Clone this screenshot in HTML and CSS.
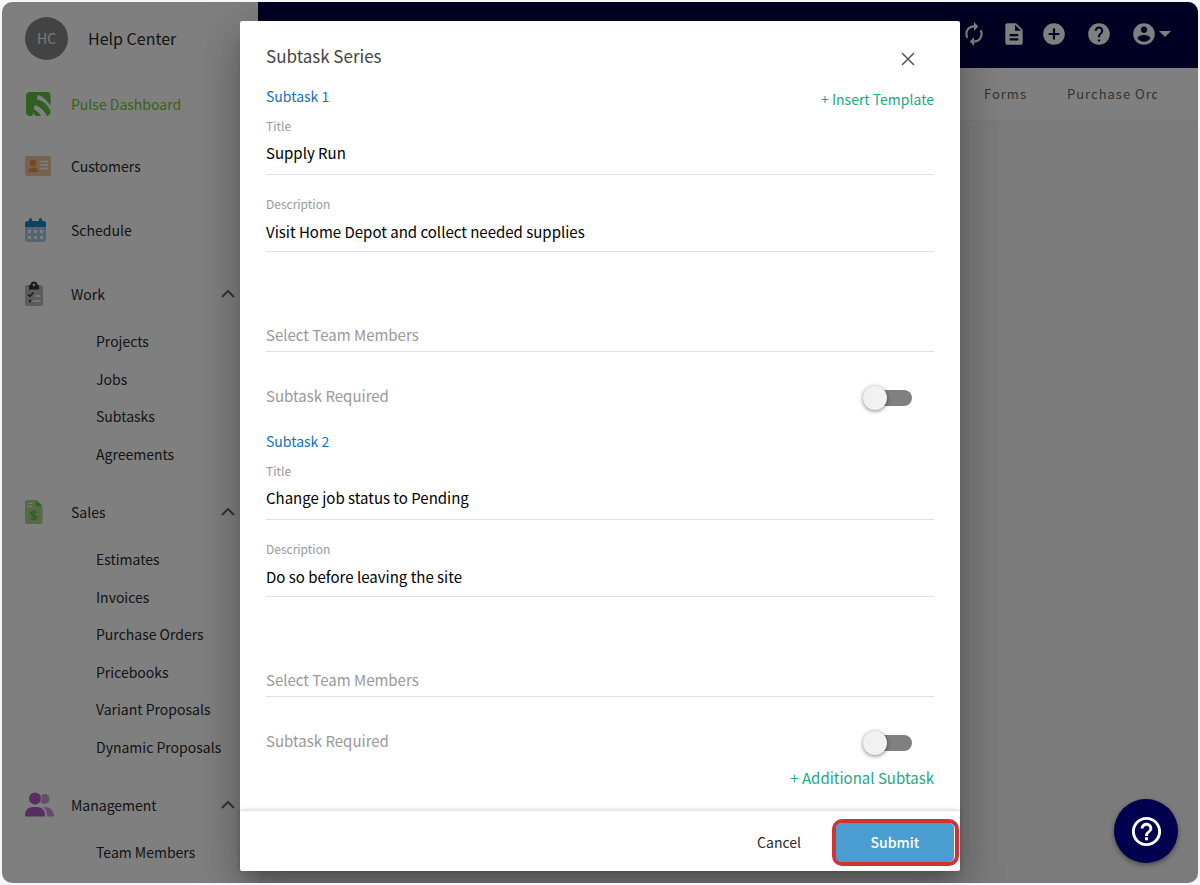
FILE: index.html
```html
<!DOCTYPE html>
<html lang="en">
<head>
    <meta charset="UTF-8">
    <meta name="viewport" content="width=device-width, initial-scale=1.0">
    <title>Subtask Series</title>
    <link rel="stylesheet" href="styles.css">
</head>
<body>
<div class="app">
    <aside class="sidebar">
        <div class="profile">
            <span class="avatar">HC</span>
            <span class="profile-name">Help Center</span>
        </div>
        <nav>
            <a href="#" class="nav-link active">
                <svg class="nav-icon" viewBox="0 0 26 26">
                    <path fill="#62bd45" fill-rule="evenodd" d="M5 1h17a3.500 3.500 0 0 1 3.500 3.500V15C22 9 17.500 5 12.500 4L12 8.500c6 1 11 5.500 13.500 11.500v2l-2.500 3h-1C19 19 14 15 9.500 14l-.5 4.500c3 1.500 5.500 3.500 7 6.500h-5.500L8.500 22 7 25H5a4 4 0 0 1-4-4V5a4 4 0 0 1 4-4z"/>
                </svg>
                Pulse Dashboard
            </a>
            <a href="#" class="nav-link">
                <svg class="nav-icon" viewBox="0 0 26 26">
                    <rect y="3" width="26" height="20" rx="2" fill="#eec4a0"/>
                    <circle cx="8" cy="10" r="3.200" fill="#e8943a"/>
                    <path fill="#e8943a" d="M3 19c0-3 2-4.500 5-4.500s5 1.500 5 4.500z"/>
                    <path stroke="#fff" stroke-width="1.600" d="M15.500 8.500H23M15.500 12H23M15.500 15.500H23"/>
                </svg>
                Customers
            </a>
            <a href="#" class="nav-link">
                <svg class="nav-icon" viewBox="0 0 26 26">
                    <path fill="#aac9e6" d="M0 9h21v13.500a2.500 2.500 0 0 1-2.500 2.500h-16A2.500 2.500 0 0 1 0 22.500z"/>
                    <path fill="#1a86c4" d="M2.500 4H4V2.500a1.500 1.500 0 0 1 3 0V4h7V2.500a1.500 1.500 0 0 1 3 0V4h1.500A2.500 2.500 0 0 1 21 6.500V10H0V6.500A2.500 2.500 0 0 1 2.500 4z"/>
                    <path fill="#fff" d="M3 13h3v3H3zM9 13h3v3H9zM15 13h3v3h-3zM3 19h3v3H3zM9 19h3v3H9zM15 19h3v3h-3z"/>
                </svg>
                Schedule
            </a>

            <button class="nav-link nav-head">
                <svg class="nav-icon" viewBox="0 0 26 26">
                    <rect y="4" width="18" height="21" rx="2.500" fill="#b8b8b8"/>
                    <path fill="#333" fill-rule="evenodd" d="M5.500 4a3.500 3.500 0 0 1 7 0H14v4.500H4V4zM9 2.800A1.400 1.400 0 1 0 9 5.600a1.400 1.400 0 0 0 0-2.800z"/>
                    <path fill="none" stroke="#333" stroke-width="1.500" d="M3 13.500l1.800 1.800 3.700-3.800"/>
                    <circle cx="5" cy="20" r="1.200" fill="#333"/>
                    <path stroke="#fff" stroke-width="1.500" d="M10 15h5.500M7.500 20h8"/>
                </svg>
                Work
                <svg class="chevron" viewBox="0 0 14 8"><path d="M1 7l6-6 6 6"/></svg>
            </button>
            <ul class="sub-nav">
                <li><a href="#">Projects</a></li>
                <li><a href="#">Jobs</a></li>
                <li><a href="#">Subtasks</a></li>
                <li><a href="#">Agreements</a></li>
            </ul>

            <button class="nav-link nav-head">
                <svg class="nav-icon" viewBox="0 0 26 26">
                    <path fill="#aad48c" d="M2.500 1H11v6h6.500v15.500A2.500 2.500 0 0 1 15 25H2.500A2.500 2.500 0 0 1 0 22.500v-19A2.500 2.500 0 0 1 2.500 1z"/>
                    <path fill="#6fb83f" d="M11 1l6.500 6H11z"/>
                    <path stroke="#fff" d="M3 4.500h4.500M3 7.500h4.500"/>
                    <path fill="none" stroke="#6fb83f" stroke-width="1.400" d="M11.500 13.500c-1-1-5.500-1.300-5.500 1 0 2.500 5.500 1.500 5.500 4 0 2.300-4.500 2.100-5.500.8M8.800 11v11"/>
                </svg>
                Sales
                <svg class="chevron" viewBox="0 0 14 8"><path d="M1 7l6-6 6 6"/></svg>
            </button>
            <ul class="sub-nav">
                <li><a href="#">Estimates</a></li>
                <li><a href="#">Invoices</a></li>
                <li><a href="#">Purchase Orders</a></li>
                <li><a href="#">Pricebooks</a></li>
                <li><a href="#">Variant Proposals</a></li>
                <li><a href="#">Dynamic Proposals</a></li>
            </ul>

            <button class="nav-link nav-head">
                <svg class="nav-icon" viewBox="0 0 26 26">
                    <circle cx="19.500" cy="7" r="5" fill="#cd98d8"/>
                    <path fill="#cd98d8" d="M20 15c5.500 0 9 4 9 9.500h-7c0-4-.8-7-3.500-9.300z"/>
                    <circle cx="10" cy="6.500" r="6.800" fill="#fff"/>
                    <circle cx="10" cy="6.500" r="6" fill="#b05cc4"/>
                    <path fill="#b05cc4" d="M0 23c0-5 3-8 8-8h4c5 0 8 3.500 8 8 0 1-.5 1.500-1.500 1.500h-17C.5 24.500 0 24 0 23z"/>
                </svg>
                Management
                <svg class="chevron" viewBox="0 0 14 8"><path d="M1 7l6-6 6 6"/></svg>
            </button>
            <ul class="sub-nav">
                <li><a href="#">Team Members</a></li>
            </ul>
        </nav>
    </aside>

    <main class="main">
        <header class="topbar">
            <button class="icon-btn" aria-label="Refresh">
                <svg viewBox="0 0 24 24"><path d="M12 6v3l4-4-4-4v3c-4.420 0-8 3.580-8 8 0 1.570.460 3.030 1.240 4.260L6.700 14.800c-.450-.830-.700-1.790-.700-2.800 0-3.310 2.690-6 6-6zm6.760 1.740L17.300 9.200c.440.840.700 1.790.700 2.800 0 3.310-2.690 6-6 6v-3l-4 4 4 4v-3c4.420 0 8-3.580 8-8 0-1.570-.460-3.030-1.240-4.260z"/></svg>
            </button>
            <button class="icon-btn" aria-label="Documents">
                <svg viewBox="0 0 24 24"><path d="M14 2H6c-1.100 0-2 .9-2 2v16c0 1.100.9 2 2 2h12c1.100 0 2-.9 2-2V8l-6-6zm2 16H8v-2h8v2zm0-4H8v-2h8v2zm-3-5V3.500L18.500 9H13z"/></svg>
            </button>
            <button class="icon-btn" aria-label="Add">
                <svg viewBox="0 0 24 24"><path d="M12 2C6.480 2 2 6.480 2 12s4.480 10 10 10 10-4.480 10-10S17.520 2 12 2zm5 11h-4v4h-2v-4H7v-2h4V7h2v4h4v2z"/></svg>
            </button>
            <button class="icon-btn spaced" aria-label="Help">
                <svg viewBox="0 0 24 24"><path d="M12 2C6.480 2 2 6.480 2 12s4.480 10 10 10 10-4.480 10-10S17.520 2 12 2zm1 17h-2v-2h2v2zm2.070-7.750l-.9.920C13.450 12.900 13 13.500 13 15h-2v-.5c0-1.100.450-2.100 1.170-2.830l1.240-1.260c.370-.360.590-.860.590-1.410 0-1.100-.9-2-2-2s-2 .9-2 2H8c0-2.210 1.790-4 4-4s4 1.790 4 4c0 .880-.360 1.680-.930 2.250z"/></svg>
            </button>
            <button class="icon-btn spaced" aria-label="Account">
                <svg viewBox="0 0 24 24"><path d="M12 2C6.480 2 2 6.480 2 12s4.480 10 10 10 10-4.480 10-10S17.520 2 12 2zm0 3c1.660 0 3 1.340 3 3s-1.340 3-3 3-3-1.340-3-3 1.340-3 3-3zm0 14.200c-2.500 0-4.710-1.280-6-3.220.030-1.990 4-3.080 6-3.080 1.990 0 5.970 1.090 6 3.080-1.290 1.940-3.500 3.220-6 3.220z"/></svg>
                <svg class="caret" viewBox="0 0 12 6"><path d="M0 0h12L6 6z"/></svg>
            </button>
        </header>
        <div class="tabs">
            <a href="#" class="tab">Forms</a>
            <a href="#" class="tab tab-cut">Purchase Orders</a>
        </div>
    </main>

    <div class="backdrop">
        <form class="modal" role="dialog" aria-labelledby="modal-title">
            <div class="modal-header">
                <h1 id="modal-title">Subtask Series</h1>
                <button type="button" class="close" aria-label="Close">
                    <svg viewBox="0 0 14 14"><path d="M1 1l12 12M13 1L1 13"/></svg>
                </button>
            </div>

            <div class="modal-body">
                <section class="subtask">
                    <div class="subtask-head">
                        <h2>Subtask 1</h2>
                        <button type="button" class="link-btn">+ Insert Template</button>
                    </div>
                    <label for="title-1">Title</label>
                    <input class="field" type="text" id="title-1" value="Supply Run">
                    <label class="desc-label" for="desc-1">Description</label>
                    <input class="field desc" type="text" id="desc-1" value="Visit Home Depot and collect needed supplies">
                    <input class="field team" type="text" aria-label="Select Team Members" placeholder="Select Team Members">
                    <div class="required">
                        <label for="required-1">Subtask Required</label>
                        <input class="toggle" type="checkbox" id="required-1">
                    </div>
                </section>

                <section class="subtask">
                    <div class="subtask-head">
                        <h2>Subtask 2</h2>
                    </div>
                    <label for="title-2">Title</label>
                    <input class="field" type="text" id="title-2" value="Change job status to Pending">
                    <label class="desc-label" for="desc-2">Description</label>
                    <input class="field desc" type="text" id="desc-2" value="Do so before leaving the site">
                    <input class="field team" type="text" aria-label="Select Team Members" placeholder="Select Team Members">
                    <div class="required">
                        <label for="required-2">Subtask Required</label>
                        <input class="toggle" type="checkbox" id="required-2">
                    </div>
                </section>

                <button type="button" class="link-btn add-subtask">+ Additional Subtask</button>
            </div>

            <div class="modal-footer">
                <button type="button" class="cancel">Cancel</button>
                <div class="submit-ring">
                    <button type="button" class="submit">Submit</button>
                </div>
            </div>
        </form>
    </div>

    <button class="fab" aria-label="Help">
        <svg viewBox="0 0 24 24"><path d="M11 18h2v-2h-2v2zm1-16C6.480 2 2 6.480 2 12s4.480 10 10 10 10-4.480 10-10S17.520 2 12 2zm0 18c-4.410 0-8-3.590-8-8s3.590-8 8-8 8 3.590 8 8-3.590 8-8 8zm0-14c-2.210 0-4 1.790-4 4h2c0-1.100.9-2 2-2s2 .9 2 2c0 2-3 1.750-3 5h2c0-2.250 3-2.500 3-5 0-2.210-1.790-4-4-4z"/></svg>
    </button>
</div>
</body>
</html>
```
FILE: styles.css
```css
* {
    box-sizing: border-box;
}

body {
    margin: 0;
    padding: 2px;
    background: #f6f6fb;
    font-family: "Noto Sans CJK SC", "Open Sans", sans-serif;
    font-size: 14px;
    line-height: 22px;
    color: #2a2a2a;
}

button, input {
    font: inherit;
    color: inherit;
    background: none;
    border: none;
    margin: 0;
    padding: 0;
}

button {
    cursor: pointer;
}

a {
    color: inherit;
    text-decoration: none;
}

svg {
    display: block;
    flex: none;
}

.app {
    position: relative;
    display: flex;
    min-height: calc(100vh - 4px);
    border-radius: 10px;
    overflow: hidden;
    background: #f6f6f6;
}

/* sidebar */
.sidebar {
    width: 256px;
    flex: none;
    background: #fff;
}

.profile {
    display: flex;
    align-items: center;
    gap: 20px;
    height: 72px;
    padding-left: 23px;
}

.avatar {
    width: 43px;
    height: 43px;
    border-radius: 50%;
    background: #868686;
    color: #f2f2f2;
    line-height: 42px;
    text-align: center;
}

.profile-name {
    font-size: 16px;
}

.nav-link {
    display: flex;
    align-items: center;
    gap: 20px;
    width: 100%;
    padding: 21px 23px;
    text-align: left;
}

.nav-link.active {
    padding: 19px 23px;
    color: #70c81c;
}

.nav-head {
    padding-bottom: 17px;
}

.nav-icon {
    width: 26px;
    height: 26px;
    margin: -2px 0;
    overflow: visible;
}

.chevron {
    width: 14px;
    height: 8px;
    margin-left: auto;
    fill: none;
    stroke: #666;
    stroke-width: 2;
}

.sub-nav {
    list-style: none;
    margin: 0 0 8px;
    padding: 0 0 0 94px;
}

.sub-nav li {
    padding: 8px 0;
}

.sub-nav li:nth-child(even) {
    padding-bottom: 7px;
}

/* top bar and tabs */
.main {
    flex: 1;
    min-width: 0;
}

.topbar {
    display: flex;
    justify-content: flex-end;
    align-items: center;
    gap: 14px;
    height: 66px;
    padding: 0 27px 2px 0;
    background: #000046;
}

.icon-btn {
    display: flex;
    align-items: center;
    gap: 2px;
}

.icon-btn svg {
    width: 26px;
    height: 26px;
    fill: #fff;
}

.icon-btn.spaced {
    margin-left: 5px;
}

.icon-btn .caret {
    width: 12px;
    height: 6px;
}

.tabs {
    display: flex;
    justify-content: flex-end;
    gap: 40px;
    padding: 15px 41px 15px 0;
    background: #fff;
    border-bottom: 1px solid #eee;
    color: #666;
    font-size: 13px;
    letter-spacing: 1px;
}

.tab-cut {
    width: 90px;
    overflow: hidden;
    white-space: nowrap;
}

/* modal */
.backdrop {
    position: absolute;
    inset: 0;
    display: flex;
    justify-content: center;
    align-items: flex-start;
    padding-top: 19px;
    background: rgba(0, 0, 0, .5);
}

.modal {
    width: 60%;
    min-width: 720px;
    background: #fff;
    border-radius: 2px;
    box-shadow: 0 11px 15px -7px rgba(0, 0, 0, .2),
                0 24px 38px 3px rgba(0, 0, 0, .14),
                0 9px 46px 8px rgba(0, 0, 0, .12);
}

.modal-header {
    display: flex;
    justify-content: space-between;
    align-items: center;
    padding: 23px 45px 15px 26px;
}

.modal-header h1 {
    margin: 0;
    font-size: 17px;
    font-weight: 400;
    line-height: 24px;
    color: #444;
}

.close svg {
    width: 14px;
    height: 14px;
    margin-top: 6px;
    stroke: #555;
    stroke-width: 1.5;
}

.modal-body {
    display: flex;
    flex-direction: column;
    padding: 0 26px 21px;
}

.subtask {
    display: flex;
    flex-direction: column;
}

.subtask + .subtask {
    margin-top: 17px;
}

.subtask-head {
    display: flex;
    justify-content: space-between;
    align-items: flex-end;
    margin-bottom: 5px;
}

.subtask-head h2 {
    margin: 0;
    padding-bottom: 2px;
    font-size: 14px;
    font-weight: 400;
    line-height: 26px;
    color: #1273b8;
}

.link-btn {
    line-height: 24px;
    color: #1fa685;
}

.add-subtask {
    align-self: flex-end;
    margin-top: 10px;
    font-size: 15px;
}

.subtask label {
    font-size: 12px;
    line-height: 20px;
    color: #999;
}

.subtask .desc-label {
    margin-top: 19px;
}

.field {
    width: 100%;
    height: 39px;
    padding-bottom: 6px;
    border-bottom: 1px solid #e2e2e2;
    outline: none;
    font-size: 15px;
    color: #000;
}

.field.desc {
    height: 38px;
    padding-bottom: 2px;
}

.field.team {
    height: 32px;
    margin-top: 68px;
    padding-bottom: 2px;
}

.field::placeholder {
    color: #999;
    opacity: 1;
}

.required {
    display: flex;
    justify-content: space-between;
    align-items: center;
    height: 28px;
    margin-top: 31px;
    padding-right: 22px;
}

.subtask .required label {
    padding-bottom: 2px;
    font-size: 15px;
}

.toggle {
    appearance: none;
    position: relative;
    width: 49px;
    height: 24px;
    margin-top: 2px;
    cursor: pointer;
}

.toggle::before {
    content: "";
    position: absolute;
    inset: 4px 0 4px 4px;
    border-radius: 8px;
    background: #808080;
}

.toggle::after {
    content: "";
    position: absolute;
    left: 0;
    top: 0;
    width: 24px;
    height: 24px;
    border-radius: 50%;
    background: #f1f1f1;
    box-shadow: 0 1px 4px rgba(0, 0, 0, .5);
}

.modal-footer {
    display: flex;
    justify-content: flex-end;
    align-items: center;
    gap: 31px;
    height: 60px;
    padding: 3px 1px 0 0;
    box-shadow: 0 -1px 4px rgba(0, 0, 0, .2);
}

.cancel {
    padding-bottom: 2px;
}

.submit-ring {
    padding-right: 1px;
    border: 4px solid #d03236;
    border-radius: 10px;
}

.submit {
    display: block;
    width: 118px;
    height: 39px;
    padding-bottom: 2px;
    border-radius: 5px;
    background: #4a9dd0;
    color: #fff;
    font-weight: 500;
}

.fab {
    position: absolute;
    right: 20px;
    bottom: 20px;
    display: grid;
    place-items: center;
    width: 64px;
    height: 64px;
    border-radius: 50%;
    background: #00004f;
    box-shadow: 0 2px 5px rgba(0, 0, 0, .4);
}

.fab svg {
    width: 35px;
    height: 35px;
    fill: #fff;
}
```
